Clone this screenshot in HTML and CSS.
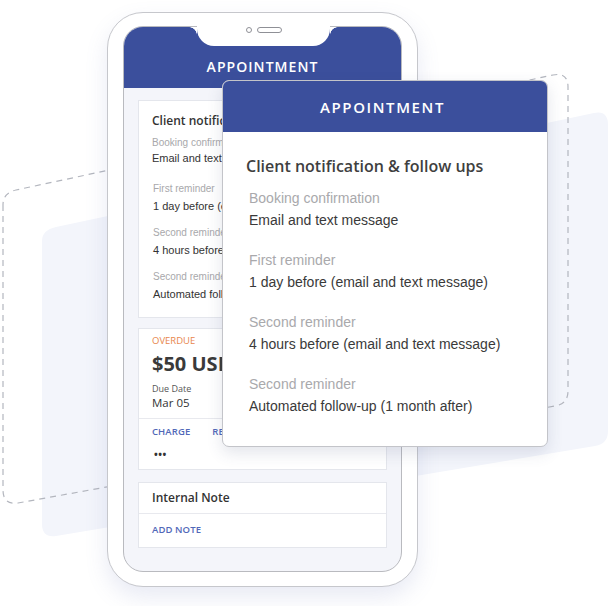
FILE: index.html
```html
<!DOCTYPE html>
<html>
<head>
<meta charset="utf-8">
<link rel="stylesheet" href="styles.css">
</head>
<body>
<div class="stage">
  <svg class="backdrop" width="610" height="606" viewBox="0 0 610 606">
    <path class="fill" d="M42,241 L42,524 Q42,538 56,536 L595,446 Q608,444 608,431 L608,125 Q608,110 594,113 L56,227 Q42,230 42,241 Z"/>
    <path class="dash" d="M3,205 L3,490 Q3,505 18,503 L555,406 Q568,404 568,391 L568,87 Q568,72 553,75 L16,190 Q3,193 3,205 Z"/>
  </svg>

  <div class="phone">
    <div class="notch"><span class="cam"></span><span class="speaker"></span></div>
    <div class="screen">
      <div class="screen-head">APPOINTMENT</div>
      <div class="screen-body">
        <div class="card notif">
          <div class="clip">
            <div class="card-title">Client notification &amp; follow ups</div>
            <div class="group"><div class="lbl">Booking confirmation</div><div class="val">Email and text message</div></div>
            <div class="group ind"><div class="lbl">First reminder</div><div class="val">1 day before (email and text message)</div></div>
            <div class="group ind"><div class="lbl">Second reminder</div><div class="val">4 hours before (email and text message)</div></div>
            <div class="group ind"><div class="lbl">Second reminder</div><div class="val">Automated follow-up (1 month after)</div></div>
          </div>
        </div>
        <div class="card invoice">
          <div class="inv-top">
            <div class="overdue">OVERDUE</div>
            <div class="amount">$50 USD</div>
            <div class="due-lbl">Due Date</div>
            <div class="due-val">Mar 05</div>
          </div>
          <div class="inv-actions">
            <div class="links"><span class="link">CHARGE</span><span class="link re">RECORD PAYMENT</span></div>
            <div class="more">&bull;&bull;&bull;</div>
          </div>
        </div>
        <div class="card note">
          <div class="note-title">Internal Note</div>
          <div class="note-add"><span class="link">ADD NOTE</span></div>
        </div>
      </div>
    </div>
  </div>

  <div class="popup">
    <div class="popup-head">APPOINTMENT</div>
    <div class="popup-body">
      <div class="popup-title">Client notification &amp; follow ups</div>
      <div class="pgroup"><div class="plbl">Booking confirmation</div><div class="pval">Email and text message</div></div>
      <div class="pgroup"><div class="plbl">First reminder</div><div class="pval">1 day before (email and text message)</div></div>
      <div class="pgroup"><div class="plbl">Second reminder</div><div class="pval">4 hours before (email and text message)</div></div>
      <div class="pgroup"><div class="plbl">Second reminder</div><div class="pval">Automated follow-up (1 month after)</div></div>
    </div>
  </div>
</div>
</body>
</html>
```
FILE: styles.css
```css
* { box-sizing: border-box; }
html, body { margin: 0; padding: 0; background: #fff; }
body { font-family: "Open Sans", "Liberation Sans", sans-serif; }

.stage { position: relative; width: 610px; height: 606px; overflow: hidden; background: #fff; }

.backdrop { position: absolute; left: 0; top: 0; }
.backdrop .fill { fill: #f3f5fb; }
.backdrop .dash { fill: none; stroke: #b3b6be; stroke-width: 1.2; stroke-dasharray: 6 5; }

/* phone */
.phone {
  position: absolute; left: 107px; top: 12px;
  width: 311px; height: 575px;
  background: #fff;
  border: 1px solid #c6c7cc;
  border-radius: 36px;
  padding: 13px 15px 14px 15px;
  box-shadow: 0 10px 22px rgba(110, 125, 185, 0.16);
}
.notch {
  position: absolute; left: 89px; top: 13px;
  width: 133px; height: 20px;
  background: #fff;
  border-radius: 0 0 17px 17px;
  display: flex; justify-content: center; align-items: flex-start;
  gap: 5px; padding-top: 1px;
  z-index: 2;
}
.notch::before, .notch::after {
  content: ""; position: absolute; top: 1px; width: 8px; height: 8px;
}
.notch::before { left: -8px; background: radial-gradient(circle at 0 100%, transparent 7.5px, #fff 8px); }
.notch::after { right: -8px; background: radial-gradient(circle at 100% 100%, transparent 7.5px, #fff 8px); }
.cam { width: 6px; height: 6px; border: 1px solid #8f9096; border-radius: 50%; }
.speaker { width: 25px; height: 6px; border: 1px solid #8f9096; border-radius: 3px; }

.screen {
  height: 100%;
  border: 1px solid #b9babf;
  border-radius: 20px;
  background: #f4f5fa;
  overflow: hidden;
  display: flex; flex-direction: column;
}
.screen-head {
  height: 61px; flex: none;
  background: #3b4f9c;
  color: #fff;
  font-weight: 600; font-size: 14px; letter-spacing: 1.05px;
  text-align: center;
  padding-top: 30px; line-height: 20px;
}
.screen-body {
  padding: 12px 14px;
  display: flex; flex-direction: column; gap: 10px;
}
.card { background: #fff; border: 1px solid #e4e6ec; }

.notif { height: 218px; padding: 12px 0 0 13px; }
.clip { width: 71px; overflow: hidden; white-space: nowrap; }
.card-title { font-size: 12px; font-weight: 600; color: #333; line-height: 16px; margin-bottom: 7px; }
.group { height: 44px; font-family: "Liberation Sans", Arial, sans-serif; }
.group.ind { padding-left: 1px; padding-top: 2px; }
.lbl { font-size: 10px; color: #a8a8ab; line-height: 14px; }
.val { font-size: 11px; color: #333; line-height: 14px; margin-top: 1px; }
.group.ind .val { margin-top: 3px; }

.invoice { height: 142px; display: flex; flex-direction: column; }
.inv-top { padding: 5px 14px 0 13px; height: 90px; border-bottom: 1px solid #e8e9ee; }
.overdue { font-size: 9.5px; color: #e8874d; line-height: 14px; }
.amount { font-size: 20px; font-weight: 700; color: #3a3a3a; line-height: 28px; margin-top: 2px; width: 71px; overflow: hidden; white-space: nowrap; }
.due-lbl { font-size: 9px; color: #555; line-height: 13px; margin-top: 4px; }
.due-val { font-size: 11.5px; color: #333; line-height: 15px; }
.inv-actions { padding: 6px 14px 0 13px; }
.links { display: flex; gap: 22px; line-height: 14px; white-space: nowrap; }
.link { font-size: 9.5px; font-weight: 600; color: #5168b8; letter-spacing: 0.1px; }
.link.re { width: 10px; overflow: hidden; display: inline-block; }
.more { font-size: 10px; font-weight: 700; color: #333; letter-spacing: 0.5px; line-height: 14px; margin-top: 8px; padding-left: 2px; }

.note { height: 66px; margin-top: 2px; display: flex; flex-direction: column; }
.note-title { height: 31px; border-bottom: 1px solid #e8e9ee; padding: 6px 14px 0 13px; font-size: 12px; font-weight: 600; color: #333; line-height: 18px; }
.note-add { padding: 6px 14px 0 13px; line-height: 14px; }

/* popup */
.popup {
  position: absolute; left: 222px; top: 80px;
  width: 326px; height: 367px;
  background: #fff;
  border: 1px solid #c3c4c9;
  border-radius: 7px;
  overflow: hidden;
  box-shadow: 0 6px 16px rgba(60, 70, 110, 0.14);
}
.popup-head {
  height: 51px; background: #3b4f9c; color: #fff;
  font-size: 15px; font-weight: 600; letter-spacing: 1.6px;
  display: flex; align-items: center; justify-content: center;
  padding-top: 1px; padding-right: 5px;
}
.popup-body { padding: 23px 20px 0 23px; }
.popup-title { font-size: 16px; font-weight: 600; color: #3f3f3f; line-height: 22px; margin-bottom: 11px; }
.pgroup { padding-left: 3px; font-family: "Liberation Sans", Arial, sans-serif; font-size: 14px; margin-bottom: 20px; }
.plbl { color: #a9a9ac; line-height: 20px; }
.pval { color: #3a3a3a; line-height: 20px; margin-top: 2px; }
```
